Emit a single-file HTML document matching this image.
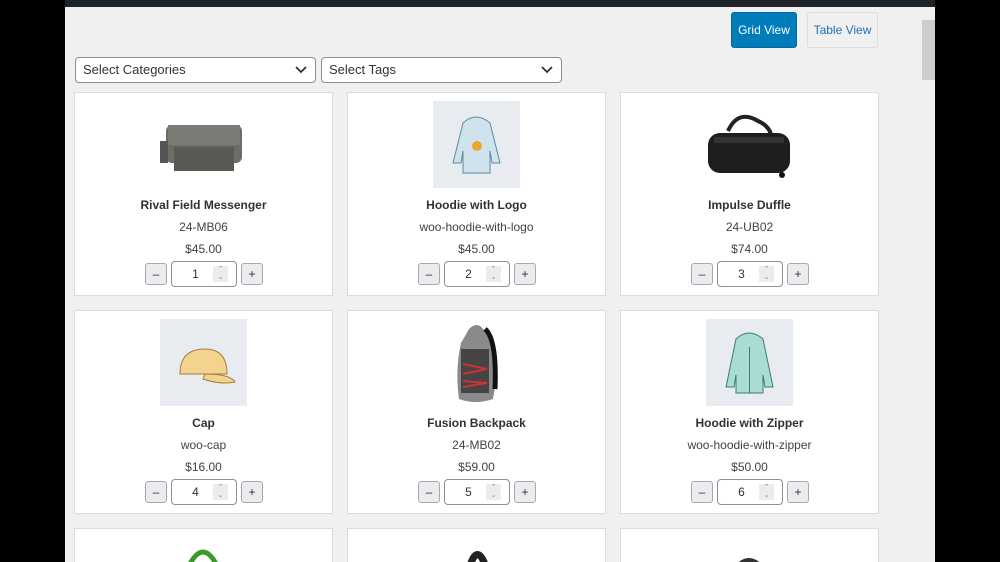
<!DOCTYPE html>
<html style="height:562px;overflow:hidden"><head><meta charset="utf-8"><style>
*{box-sizing:border-box;margin:0;padding:0}
body{width:1000px;height:562px;overflow:hidden;background:#000;font-family:"Liberation Sans",sans-serif;position:relative}
.page{position:absolute;left:65px;top:0;width:857px;height:562px;background:#f0f0f1}
.top{position:absolute;left:65px;top:0;width:870px;height:7px;background:#1d2327}
.sb{position:absolute;left:922px;top:7px;width:13px;height:555px;background:#f0f0f1}
.thumb{position:absolute;left:922px;top:20px;width:13px;height:60px;background:#cdcdcd}
.btn{position:absolute;top:12px;height:36px;border-radius:3px;font-size:12px;line-height:34px;text-align:center}
.sel{position:absolute;top:57px;height:26px;background:#fff;border:1px solid #8c8f94;border-radius:4px;font-size:13px;color:#2c3338;line-height:24px;padding-left:7px}
.sel svg{position:absolute;right:8px;top:8px}
.card{position:absolute;width:259px;height:204px;background:#fff;border:1px solid #dcdcde;overflow:hidden}
.img{position:absolute;left:85px;top:8px;width:87px;height:87px}
.nm{position:absolute;left:0;width:100%;top:105px;text-align:center;font-size:12px;font-weight:bold;color:#2c3338}
.sku{position:absolute;left:0;width:100%;top:127px;text-align:center;font-size:12px;color:#3c434a}
.pr{position:absolute;left:0;width:100%;top:149px;text-align:center;font-size:12px;color:#3c434a}
.q{position:absolute;top:170px;width:22px;height:22px;background:#ececf0;border:1px solid #a7aaad;border-radius:3px;font-size:12px;text-align:center;line-height:20px;color:#2c3338}
.in{position:absolute;left:96px;top:168px;width:66px;height:26px;border:1px solid #8c8f94;border-radius:4px;font-size:12px;line-height:24px;color:#2c3338}
.in span{position:absolute;left:20px;width:7px;text-align:center}
.in i{position:absolute;right:8px;top:4px;width:15px;height:16px;background:#ececec;font-style:normal;font-size:7px;line-height:8px;text-align:center;color:#888}
</style></head><body>
<div class="page"></div><div class="top"></div><div class="sb"></div><div class="thumb"></div>
<div class="btn" style="left:731px;width:66px;background:#007cba;color:#fff;border:1px solid #0069a0">Grid View</div>
<div class="btn" style="left:807px;width:71px;background:#f0f0f1;color:#2271b1;border:1px solid #dcdcde">Table View</div>
<div class="sel" style="left:75px;width:241px">Select Categories<svg width="12" height="8"><path d="M1 1l5 5 5-5" stroke="#2c3338" stroke-width="1.8" fill="none"/></svg></div>
<div class="sel" style="left:321px;width:241px">Select Tags<svg width="12" height="8"><path d="M1 1l5 5 5-5" stroke="#2c3338" stroke-width="1.8" fill="none"/></svg></div>

<div class="card" style="left:74px;top:92px"><svg class="img" viewBox="0 0 87 87"><rect x="6" y="24" width="76" height="38" rx="6" fill="#6d6d68"/><rect x="8" y="24" width="72" height="20" fill="#7c7c76"/><rect x="14" y="46" width="60" height="24" fill="#5a5a55"/><rect x="0" y="40" width="8" height="22" fill="#555"/></svg><div class="nm">Rival Field Messenger</div><div class="sku">24-MB06</div><div class="pr">$45.00</div><div class="q" style="left:70px">–</div><div class="in"><span>1</span><i>⌃<br>⌄</i></div><div class="q" style="left:166px">+</div></div>

<div class="card" style="left:347px;top:92px"><svg class="img" viewBox="0 0 87 87"><rect width="87" height="87" fill="#e8ecf0"/><path d="M30 22q13-12 27 0l10 40h-8l-2-12v22H30V50l-2 12h-8z" fill="#cfe3ec" stroke="#5a8aa0"/><circle cx="44" cy="45" r="5" fill="#e9a632"/></svg><div class="nm">Hoodie with Logo</div><div class="sku">woo-hoodie-with-logo</div><div class="pr">$45.00</div><div class="q" style="left:70px">–</div><div class="in"><span>2</span><i>⌃<br>⌄</i></div><div class="q" style="left:166px">+</div></div>

<div class="card" style="left:620px;top:92px"><svg class="img" viewBox="0 0 87 87"><path d="M22 30q10-22 30-10q14 6 14 20" stroke="#222" stroke-width="4" fill="none"/><rect x="2" y="32" width="82" height="40" rx="12" fill="#1e1e1e"/><rect x="8" y="36" width="70" height="6" fill="#333"/><circle cx="76" cy="74" r="3" fill="#111"/></svg><div class="nm">Impulse Duffle</div><div class="sku">24-UB02</div><div class="pr">$74.00</div><div class="q" style="left:70px">–</div><div class="in"><span>3</span><i>⌃<br>⌄</i></div><div class="q" style="left:166px">+</div></div>

<div class="card" style="left:74px;top:310px"><svg class="img" viewBox="0 0 87 87"><rect width="87" height="87" fill="#e8ecf0"/><path d="M20 55q0-25 25-25q22 0 22 25z" fill="#f3d38e" stroke="#a08040"/><path d="M45 55q25 0 30 8q-15 3-32-3z" fill="#f3d38e" stroke="#a08040"/></svg><div class="nm">Cap</div><div class="sku">woo-cap</div><div class="pr">$16.00</div><div class="q" style="left:70px">–</div><div class="in"><span>4</span><i>⌃<br>⌄</i></div><div class="q" style="left:166px">+</div></div>

<div class="card" style="left:347px;top:310px"><svg class="img" viewBox="0 0 87 87"><path d="M36 10q8-8 14 0l10 10q6 30 0 60q-18 6-34 0q-4-30 2-56z" fill="#8a8a8a"/><path d="M52 10q12 10 10 60" stroke="#111" stroke-width="5" fill="none"/><path d="M28 30h28v44H28z" fill="#444"/><path d="M30 45l24 5M30 55l24-5M30 62l24 2M30 68l24-4" stroke="#c33" stroke-width="2"/></svg><div class="nm">Fusion Backpack</div><div class="sku">24-MB02</div><div class="pr">$59.00</div><div class="q" style="left:70px">–</div><div class="in"><span>5</span><i>⌃<br>⌄</i></div><div class="q" style="left:166px">+</div></div>

<div class="card" style="left:620px;top:310px"><svg class="img" viewBox="0 0 87 87"><rect width="87" height="87" fill="#e8ecf0"/><path d="M30 20q13-12 27 0l10 48h-8l-2-12v18H30V56l-2 12h-8z" fill="#a9ddd4" stroke="#3d7b72"/><path d="M43.5 28v46" stroke="#3d7b72"/></svg><div class="nm">Hoodie with Zipper</div><div class="sku">woo-hoodie-with-zipper</div><div class="pr">$50.00</div><div class="q" style="left:70px">–</div><div class="in"><span>6</span><i>⌃<br>⌄</i></div><div class="q" style="left:166px">+</div></div>

<div class="card" style="left:74px;top:528px;height:34px;border-bottom:0"><svg class="img" viewBox="0 0 87 87"><path d="M24 40q19-50 38 0" stroke="#3a9a2a" stroke-width="5" fill="none"/></svg></div>
<div class="card" style="left:347px;top:528px;height:34px;border-bottom:0"><svg class="img" viewBox="0 0 87 87"><path d="M34 40q10-45 22 0" stroke="#222" stroke-width="7" fill="none"/></svg></div>
<div class="card" style="left:620px;top:528px;height:34px;border-bottom:0"><svg class="img" viewBox="0 0 87 87"><path d="M26 40q17-30 34 0" stroke="#333" stroke-width="8" fill="none"/></svg></div>
</body></html>
